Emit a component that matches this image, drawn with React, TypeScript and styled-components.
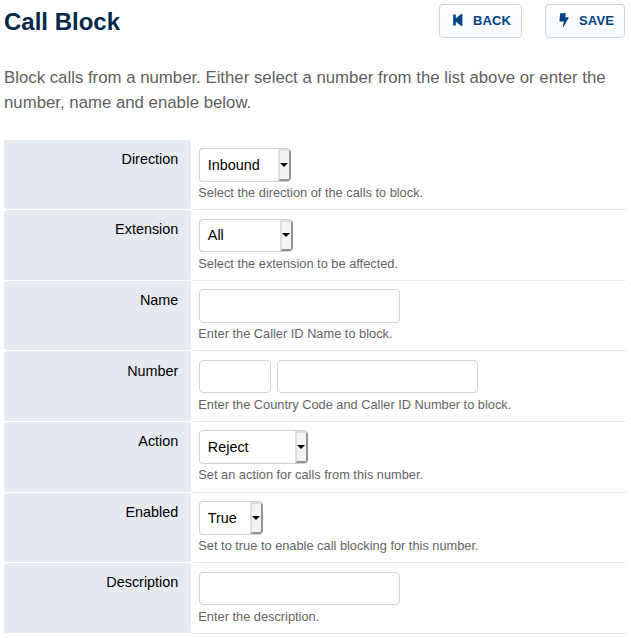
import React from "react";
import styled, { createGlobalStyle } from "styled-components";

const GlobalStyle = createGlobalStyle`
  *, *::before, *::after { box-sizing: border-box; }
  body {
    margin: 0;
    background: #fff;
    color: #000;
    font-family: "Liberation Sans", Arial, sans-serif;
    overflow: hidden;
  }
`;

const Page = styled.main`
  width: 623px;
  margin-left: 4px;
  padding-top: 4px;
`;

const ActionBar = styled.header`
  display: flex;
  align-items: flex-start;
  width: 621px;
  height: 61px;
`;

const Title = styled.h1`
  flex: 1;
  margin: 4px 0 0;
  color: #032849;
  font-size: 24px;
  line-height: 28px;
  font-weight: bold;
`;

const ActionButton = styled.button<{ $width: number }>`
  display: flex;
  align-items: center;
  width: ${(p) => p.$width}px;
  height: 34px;
  margin-left: 23px;
  padding: 0 0 2px 13px;
  border: 1px solid #cfd5df;
  border-radius: 4px;
  background: linear-gradient(#fdfeff, #f6faff);
  color: #004083;
  font: bold 13px "Liberation Sans", Arial, sans-serif;
  letter-spacing: 0.15px;
  white-space: nowrap;
`;

const ButtonIcon = styled.svg`
  flex: none;
  margin-right: 10px;
  fill: currentColor;
`;

const Intro = styled.p`
  height: 74.6px;
  margin: 0;
  color: #5f5f5f;
  font-size: 16.8px;
  line-height: 25px;
  white-space: nowrap;
`;

const FormRow = styled.div`
  display: grid;
  grid-template-columns: 187px 1fr;
  height: 70.6px;
`;

const Label = styled.label`
  padding: 10.2px 12.7px 0 0;
  border-bottom: 1px solid #fff;
  border-radius: 3px;
  background: #e5e9f0;
  background-clip: padding-box;
  font-size: 14.4px;
  line-height: 18px;
  text-align: right;
`;

const Field = styled.div`
  padding: 8.4px 0 0 8px;
  border-bottom: 1px solid #e5e9f0;
  border-radius: 3px;
`;

const Controls = styled.div`
  display: flex;
  gap: 6px;
  height: 33.6px;
`;

const TextInput = styled.input<{ $width: number }>`
  width: ${(p) => p.$width}px;
  height: 33.6px;
  padding: 5px 7px;
  border: 1px solid #cfd3dd;
  border-radius: 4px;
  background: #fff;
  font: 14.4px "Liberation Sans", Arial, sans-serif;
`;

const SelectBox = styled.button<{ $width: number }>`
  display: flex;
  align-items: stretch;
  justify-content: space-between;
  width: ${(p) => p.$width}px;
  height: 33.6px;
  padding: 0 0 0 7.8px;
  border: 1px solid #cfd3d8;
  border-right: 0;
  border-radius: 4px;
  overflow: hidden;
  background: #fff;
  color: #000;
  font: 14.4px/31px "Liberation Sans", Arial, sans-serif;
`;

const SelectValue = styled.span`
  padding-top: 0.6px;
`;

const DropArrow = styled.span`
  display: flex;
  align-items: center;
  justify-content: flex-start;
  width: 13px;
  border: solid;
  border-width: 2px;
  border-color: #dedede #929292 #929292 #dedede;
  border-radius: 0 3px 3px 0;
  background: #f4f3f2;

  &::after {
    content: "";
    flex: none;
    border: solid transparent;
    border-width: 4px 4px 0;
    border-top-color: #000;
  }
`;

const Hint = styled.div`
  margin-top: 2.4px;
  margin-left: -0.7px;
  color: #646464;
  font-size: 12.8px;
  line-height: 17px;
`;

type Control = { kind: "select"; width: number; value: string } | { kind: "text"; width: number };

const rows: { label: string; hint: string; controls: Control[] }[] = [
  { label: "Direction", hint: "Select the direction of the calls to block.", controls: [{ kind: "select", width: 92, value: "Inbound" }] },
  { label: "Extension", hint: "Select the extension to be affected.", controls: [{ kind: "select", width: 94.4, value: "All" }] },
  { label: "Name", hint: "Enter the Caller ID Name to block.", controls: [{ kind: "text", width: 201 }] },
  { label: "Number", hint: "Enter the Country Code and Caller ID Number to block.", controls: [{ kind: "text", width: 72 }, { kind: "text", width: 201 }] },
  { label: "Action", hint: "Set an action for calls from this number.", controls: [{ kind: "select", width: 108.6, value: "Reject" }] },
  { label: "Enabled", hint: "Set to true to enable call blocking for this number.", controls: [{ kind: "select", width: 63.6, value: "True" }] },
  { label: "Description", hint: "Enter the description.", controls: [{ kind: "text", width: 201 }] },
];

export default function App() {
  return (
    <>
      <GlobalStyle />
      <Page>
        <ActionBar>
          <Title>Call Block</Title>
          <ActionButton $width={83}>
            <ButtonIcon width="10" height="12" viewBox="0 0 10 12">
              <path d="M.2.5h2.6v4L7.6.4c.8-.6 1.8-.2 1.8.7v9.8c0 .9-1 1.3-1.8.7L2.8 7.5v4H.2z" />
            </ButtonIcon>
            BACK
          </ActionButton>
          <ActionButton $width={80}>
            <ButtonIcon width="10" height="14" viewBox="0 0 10 14">
              <path d="M1.7.2H7l-.8 4H9c.5 0 .7.5.5.8L4.8 13.5c-.3.5-1 .3-.9-.3l1-4.8H.9c-.4 0-.6-.3-.5-.6L1.2.6c0-.3.2-.4.5-.4z" />
            </ButtonIcon>
            SAVE
          </ActionButton>
        </ActionBar>
        <Intro>
          Block calls from a number. Either select a number from the list above or enter the
          <br />
          number, name and enable below.
        </Intro>
        {rows.map((row) => (
          <FormRow key={row.label}>
            <Label>{row.label}</Label>
            <Field>
              <Controls>
                {row.controls.map((c, i) =>
                  c.kind === "select" ? (
                    <SelectBox key={i} $width={c.width} type="button">
                      <SelectValue>{c.value}</SelectValue>
                      <DropArrow />
                    </SelectBox>
                  ) : (
                    <TextInput key={i} $width={c.width} aria-label={row.label} />
                  )
                )}
              </Controls>
              <Hint>{row.hint}</Hint>
            </Field>
          </FormRow>
        ))}
      </Page>
    </>
  );
}
